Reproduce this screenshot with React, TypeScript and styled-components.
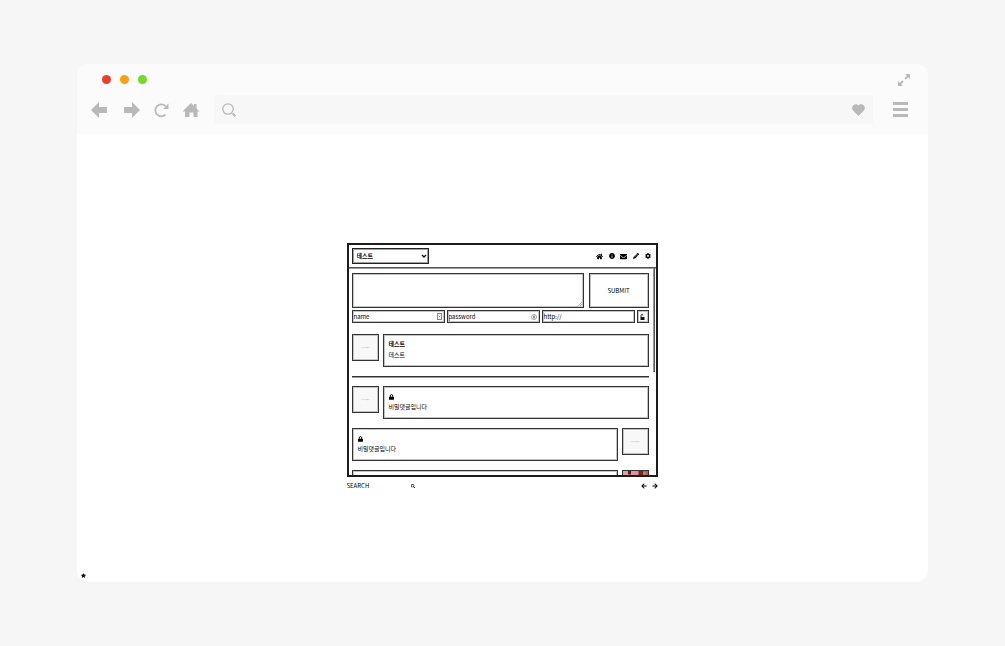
import React from "react";
import styled, { createGlobalStyle, css } from "styled-components";
import {
  FaHome, FaInfoCircle, FaEnvelope, FaPencilAlt, FaCog, FaLock,
  FaSearch, FaArrowLeft, FaArrowRight, FaStar,
} from "react-icons/fa";

const GlobalStyle = createGlobalStyle`
  *, *::before, *::after { box-sizing: border-box; }
  body { margin: 0; background: #f6f6f6; }
  body, button, input, select, textarea {
    font-family: "Noto Sans CJK KR", "Noto Sans", sans-serif;
    font-size: 6px;
    line-height: 8px;
    color: #000;
  }
  button { border: 0; padding: 0; background: none; cursor: pointer; }
  svg { display: block; }
`;

const line = css`border: 1px solid #333; box-shadow: inset 0 0 0 1px #c4c4c4;`;

const Page = styled.div`
  min-height: 100vh;
  padding: 64px 77px;
  display: flex;
`;
const Browser = styled.section`
  flex: 1;
  min-width: 0;
  display: flex;
  flex-direction: column;
  border-radius: 12px;
  overflow: hidden;
  background: #fff;
`;
const Chrome = styled.header`
  background: #fbfbfb;
  padding: 9px 18px 10px 14px;
`;
const TitleBar = styled.div`
  display: flex;
  justify-content: space-between;
  align-items: center;
  height: 13px;
  padding-left: 11px;
`;
const Lights = styled.div`display: flex; gap: 9px;`;
const Light = styled.span<{ $color: string }>`
  width: 9px;
  height: 9px;
  border-radius: 50%;
  background: ${(p) => p.$color};
`;
const NavBar = styled.nav`
  display: flex;
  align-items: center;
  margin-top: 9px;
  color: #b9b9b9;
`;
const NavButtons = styled.div`
  display: flex;
  align-items: center;
  gap: 14px;
  margin-right: 14px;
`;
const ChromeButton = styled.button`color: #b9b9b9;`;
const AddressBar = styled.div`
  flex: 1;
  height: 29px;
  display: flex;
  align-items: center;
  padding: 0 8px;
  border-radius: 4px;
  background: #f7f7f7;
`;
const Address = styled.input`
  flex: 1;
  min-width: 0;
  border: 0;
  outline: 0;
  background: transparent;
  font-size: 12px;
`;
const MenuButton = styled(ChromeButton)`margin-left: 20px;`;

const Viewport = styled.main`
  flex: 1;
  display: flex;
  flex-direction: column;
  align-items: center;
  padding: 109px 4px 4px;
`;
const Guestbook = styled.div`
  width: 100%;
  max-width: 311px;
  margin-right: 1px;
`;
const Board = styled.div`
  border: 2px solid #1c1c1c;
  height: 234px;
  display: flex;
  flex-direction: column;
  overflow: hidden;
`;
const BoardHeader = styled.div`
  display: flex;
  align-items: center;
  justify-content: space-between;
  padding: 3px 4px 3px 3px;
  border-bottom: 1px solid #555;
  box-shadow: 0 1px 0 #999;
`;
const SelectWrap = styled.div`
  position: relative;
  width: 77px;
  svg { position: absolute; right: 2px; top: 6px; pointer-events: none; }
`;
const BoardSelect = styled.select`
  border: 1px solid #222;
  box-shadow: inset 0 0 0 1px #a0a0a0;
  display: block;
  width: 100%;
  height: 16px;
  padding: 0 4px;
  appearance: none;
  background: #fff;
  border-radius: 0;
  font-weight: 700;
`;
const Tools = styled.div`display: flex; gap: 4px;`;
const Tool = styled.button`
  width: 8px;
  display: flex;
  justify-content: center;
`;
const Scroller = styled.div`
  flex: 1;
  min-height: 0;
  display: flex;
  justify-content: space-between;
`;
const Content = styled.div`
  flex: 1;
  min-width: 0;
  padding: 5px 4px 0 3px;
`;
const Thumb = styled.div`
  width: 2px;
  height: 104px;
  margin-right: 1px;
  border-left: 1px solid #999;
  border-right: 1px solid #555;
`;
const Row = styled.div`display: flex;`;
const Message = styled.textarea`
  ${line}
  flex: 1;
  min-width: 0;
  height: 35px;
  resize: none;
  padding: 3px;
  background: transparent;
`;
const MessageWrap = styled.div`
  flex: 1;
  min-width: 0;
  display: flex;
  position: relative;
  svg { position: absolute; right: 2px; bottom: 2px; }
`;
const Submit = styled.button`
  ${line}
  width: 60px;
  margin-left: 5px;
`;
const Fields = styled.div`
  display: flex;
  gap: 2px;
  margin-top: 2px;
`;
const Field = styled.label`
  ${line}
  flex: 1;
  min-width: 0;
  height: 13px;
  display: flex;
  align-items: center;
  padding: 0 2px 0 1px;
`;
const FieldInput = styled.input`
  flex: 1;
  min-width: 0;
  border: 0;
  padding: 0;
  outline: 0;
  background: transparent;
  &::placeholder { color: #000; opacity: 1; }
`;
const LockButton = styled.button`
  ${line}
  width: 12px;
  display: flex;
  align-items: center;
  justify-content: center;
`;
const Comment = styled.article<{ $reply?: boolean }>`
  display: flex;
  flex-direction: ${(p) => (p.$reply ? "row-reverse" : "row")};
  align-items: flex-start;
  gap: 4px;
  margin-top: 9px;
`;
const Comments = styled.div`padding-top: 2px;`;
const Avatar = styled.div`
  ${line}
  width: 27px;
  height: 27px;
  display: flex;
  align-items: center;
  justify-content: center;
  background: #f8f8f8;
  color: #aaa;
  font-size: 2px;
  font-style: italic;
  line-height: 4px;
`;
const Bubble = styled.div`
  ${line}
  flex: 1;
  min-width: 0;
  height: 33px;
  padding: 5px;
`;
const Name = styled.div`
  height: 8px;
  font-weight: 700;
`;
const LockIcon = styled(FaLock)`
  width: 5px;
  height: 8px;
  padding-top: 2px;
`;
const Text = styled.p`margin: 3px 0 0;`;
const Divider = styled.hr`
  height: 1px;
  margin: 9px 0 0;
  border: 0;
  background: #333;
  box-shadow: 0 1px 0 #999;
`;
const Footer = styled.footer`
  display: flex;
  justify-content: space-between;
  align-items: center;
  margin-top: 5px;
`;
const SearchForm = styled.form`
  display: flex;
  align-items: center;
  width: 68px;
`;
const Pager = styled.div`display: flex; gap: 5px;`;
const StarButton = styled.button`
  align-self: flex-start;
  margin-top: auto;
  color: #111;
`;

const Photo = () => (
  <svg width="25" height="25" viewBox="0 0 25 25" aria-hidden="true">
    <rect width="25" height="25" fill="#b4605a" />
    <path d="M0 0h5v25H0z" fill="#d9a0ad" />
    <path d="M5 0h3v3H5z" fill="#4a2030" />
    <path d="M8 0h7v5H8z" fill="#df93a8" />
    <path d="M16 0h4v6h-4z" fill="#6b2d28" />
    <path d="M20 1h3v4h-3z" fill="#cf7750" />
  </svg>
);

type Entry = { name?: string; text?: string; divider?: boolean; reply?: boolean; photo?: boolean };

const comments: Entry[] = [
  { name: "테스트", text: "테스트", divider: true },
  { text: "비밀댓글입니다" },
  { text: "비밀댓글입니다", reply: true },
  { reply: true, photo: true },
];

export default function App() {
  return (
    <>
      <GlobalStyle />
      <Page>
        <Browser>
          <Chrome>
            <TitleBar>
              <Lights>
                <Light $color="#f03e2c" />
                <Light $color="#fc9f12" />
                <Light $color="#70dc28" />
              </Lights>
              <ChromeButton aria-label="Full screen">
                <svg width="12" height="12" viewBox="0 0 12 12">
                  <path d="M7 0h5v5zM0 7v5h5z" fill="currentColor" />
                  <path d="M10.500 1.500L7 5M1.500 10.500L5 7" stroke="currentColor" strokeWidth="1.800" />
                </svg>
              </ChromeButton>
            </TitleBar>
            <NavBar>
              <NavButtons>
                <ChromeButton aria-label="Back">
                  <svg width="18" height="16" viewBox="0 0 18 16"><path d="M0 8l8-8v5h8v6H8v5z" fill="currentColor" /></svg>
                </ChromeButton>
                <ChromeButton aria-label="Forward">
                  <svg width="17" height="16" viewBox="0 0 17 16"><path d="M17 8L9 0v5H1v6h8v5z" fill="currentColor" /></svg>
                </ChromeButton>
                <ChromeButton aria-label="Reload">
                  <svg width="15" height="16" viewBox="0 0 15 16">
                    <path d="M11.600 12.600A6 6 0 1 1 11.500 4" fill="none" stroke="currentColor" strokeWidth="1.800" />
                    <path d="M14.500 1.500v5.500H9z" fill="currentColor" />
                  </svg>
                </ChromeButton>
                <ChromeButton aria-label="Home">
                  <svg width="17" height="16" viewBox="0 0 17 16">
                    <path d="M8 1l3 3V2h2.500v4.500l3 3h-2V15h-4v-4.500H6.500V15H2V9.500H-.5z" fill="currentColor" />
                  </svg>
                </ChromeButton>
              </NavButtons>
              <AddressBar>
                <svg width="15" height="15" viewBox="0 0 15 15">
                  <circle cx="6" cy="7" r="5.200" fill="none" stroke="#b9b9b9" strokeWidth="1.300" />
                  <path d="M10.500 11.500l3 2.700" stroke="#b9b9b9" strokeWidth="2" />
                </svg>
                <Address aria-label="Address" />
                <svg width="13" height="12" viewBox="0 0 13 12">
                  <path d="M6.500 12L1 6.500C-2 2.500 3.500-2 6.500 1.600 9.500-2 15 2.500 12 6.500z" fill="#b9b9b9" />
                </svg>
              </AddressBar>
              <MenuButton aria-label="Menu">
                <svg width="17" height="16" viewBox="0 0 17 16">
                  <path d="M0 0h15v3H0zM0 6h15v3H0zM0 12h15v3H0z" fill="currentColor" />
                </svg>
              </MenuButton>
            </NavBar>
          </Chrome>
          <Viewport>
            <Guestbook>
              <Board>
                <BoardHeader>
                  <SelectWrap>
                    <BoardSelect aria-label="Board"><option>테스트</option></BoardSelect>
                    <svg width="6" height="5" viewBox="0 0 6 5"><path d="M1 1l2 2 2-2" fill="none" stroke="#111" strokeWidth="1.400" /></svg>
                  </SelectWrap>
                  <Tools>
                    <Tool aria-label="Home"><FaHome size={7} /></Tool>
                    <Tool aria-label="Info"><FaInfoCircle size={6} /></Tool>
                    <Tool aria-label="Mail"><FaEnvelope size={7} /></Tool>
                    <Tool aria-label="Write"><FaPencilAlt size={6} /></Tool>
                    <Tool aria-label="Settings"><FaCog size={6} /></Tool>
                  </Tools>
                </BoardHeader>
                <Scroller>
                  <Content>
                    <Row>
                      <MessageWrap>
                        <Message aria-label="Message" />
                        <svg width="4" height="4" viewBox="0 0 4 4"><path d="M0 4l4-4M2 4l2-2" stroke="#888" strokeWidth=".6" /></svg>
                      </MessageWrap>
                      <Submit>SUBMIT</Submit>
                    </Row>
                    <Fields>
                      <Field>
                        <FieldInput placeholder="name" aria-label="name" />
                        <svg width="5" height="7" viewBox="0 0 5 7"><rect x=".5" y=".5" width="4" height="6" fill="#eee" stroke="#888" /><path d="M2 3h1v1H2z" fill="#777" /></svg>
                      </Field>
                      <Field>
                        <FieldInput type="password" placeholder="password" aria-label="password" />
                        <svg width="6" height="6" viewBox="0 0 6 6"><circle cx="3" cy="3" r="2.500" fill="none" stroke="#777" strokeWidth=".7" /><path d="M3 1.500v3M2 3h2" stroke="#555" strokeWidth=".8" /></svg>
                      </Field>
                      <Field><FieldInput placeholder="http://" aria-label="homepage" /></Field>
                      <LockButton aria-label="Secret">
                        <svg width="5" height="6" viewBox="0 0 5 6">
                          <path d="M1 3V1.500a1 1 0 0 1 2 0" fill="none" stroke="#111" strokeWidth=".9" />
                          <path d="M.5 3h4v3h-4z" fill="#111" />
                        </svg>
                      </LockButton>
                    </Fields>
                    <Comments>
                      {comments.map((c, i) => (
                        <React.Fragment key={i}>
                          <Comment $reply={c.reply}>
                            <Avatar>{c.photo ? <Photo /> : "no image"}</Avatar>
                            <Bubble>
                              {c.text && <Name>{c.name ?? <LockIcon />}</Name>}
                              {c.text && <Text>{c.text}</Text>}
                            </Bubble>
                          </Comment>
                          {c.divider && <Divider />}
                        </React.Fragment>
                      ))}
                    </Comments>
                  </Content>
                  <Thumb />
                </Scroller>
              </Board>
              <Footer>
                <SearchForm>
                  <FieldInput placeholder="SEARCH" aria-label="Search" />
                  <button type="button" aria-label="Search"><FaSearch size={4} /></button>
                </SearchForm>
                <Pager>
                  <button aria-label="Previous"><FaArrowLeft size={6} /></button>
                  <button aria-label="Next"><FaArrowRight size={6} /></button>
                </Pager>
              </Footer>
            </Guestbook>
            <StarButton aria-label="Favourite"><FaStar size={5} /></StarButton>
          </Viewport>
        </Browser>
      </Page>
    </>
  );
}
